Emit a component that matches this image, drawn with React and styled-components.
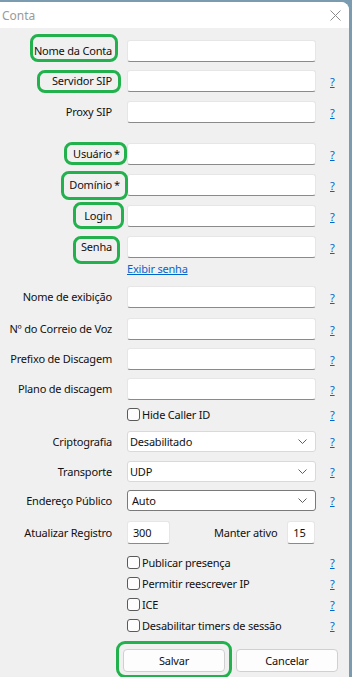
import styled, { createGlobalStyle } from 'styled-components';

const Global = createGlobalStyle`
  html, body {
    margin: 0;
    padding: 0;
    background-color: #7b9bb0;
  }
  body {
    font-family: "Noto Sans", "Open Sans", sans-serif;
    font-size: 11px;
    letter-spacing: -0.2px;
    color: #111111;
  }
`;

const Window = styled.div`
  width: 349px;
  height: 675px;
  margin-top: 2px;
  background-color: #f0f0f0;
  border-top-right-radius: 8px;
  overflow: hidden;
  display: flex;
  flex-direction: column;
`;

const TitleBar = styled.div`
  height: 26px;
  flex-shrink: 0;
  background-color: #ffffff;
  display: flex;
  align-items: center;
  justify-content: space-between;
  padding: 0 8px 0 2px;

  span {
    color: #9a9a9a;
    font-size: 12px;
    letter-spacing: 0;
  }
`;

const Form = styled.div`
  display: flex;
  flex-direction: column;
  padding-top: 12px;
`;

const Row = styled.div`
  display: grid;
  grid-template-columns: 112px 189px 1fr;
  column-gap: 15px;
  align-items: center;
  height: ${(p) => p.$h || 22}px;
  margin-top: ${(p) => p.$gap || 0}px;
`;

const Label = styled.div`
  text-align: right;
  white-space: nowrap;
  line-height: 16px;
`;

/* green annotation ring, anchored to the right edge of the label */
const Highlight = styled.span`
  position: relative;
  display: inline-block;
  line-height: 16px;

  &::after {
    content: '';
    position: absolute;
    top: ${(p) => p.$t}px;
    bottom: ${(p) => p.$b}px;
    right: ${(p) => p.$r}px;
    width: ${(p) => p.$w}px;
    box-sizing: border-box;
    border: 3px solid #22b14c;
    border-radius: 8px;
    pointer-events: none;
  }
`;

const Required = styled.span`
  display: inline-block;
  margin-left: 2px;
  margin-right: -9px;
  width: 7px;
  text-align: left;
`;

const TextBox = styled.div`
  box-sizing: border-box;
  height: ${(p) => p.$h || 22}px;
  width: ${(p) => (p.$w ? `${p.$w}px` : '100%')};
  background-color: #ffffff;
  border: 1px solid #e6e6e6;
  border-bottom: 1px solid #8a8a8a;
  border-radius: 3px;
  padding-left: 5px;
  display: flex;
  align-items: center;
  flex-shrink: 0;
`;

const Combo = styled.div`
  box-sizing: border-box;
  height: 21px;
  background-color: #ffffff;
  border: 1px solid ${(p) => (p.$focus ? '#7a7a7a' : '#d9d9d9')};
  border-radius: 3px;
  padding: 0 8px 0 ${(p) => (p.$focus ? 4 : 2)}px;
  display: flex;
  align-items: center;
  justify-content: space-between;
`;

const Help = styled.a`
  color: #0066cc;
  text-decoration: underline;
  justify-self: start;
  margin-left: -1px;
`;

const LinkCell = styled.a`
  grid-column: 2;
  color: #0066cc;
  text-decoration: underline;
  line-height: 16px;
`;

const Inline = styled.div`
  display: flex;
  align-items: center;
`;

const SubLabel = styled.span`
  white-space: nowrap;
  margin-left: 44px;
  margin-right: 10px;
`;

const Check = styled.label`
  grid-column: 2;
  display: flex;
  align-items: center;
  white-space: nowrap;

  i {
    box-sizing: border-box;
    width: 13px;
    height: 13px;
    border: 1px solid #5a5a5a;
    border-radius: 3px;
    background-color: #fdfdfd;
    margin-right: 2px;
  }
`;

const ButtonRow = styled.div`
  display: flex;
  gap: 11px;
  margin-top: 13px;
  padding-left: 123px;
`;

const Button = styled.div`
  box-sizing: border-box;
  width: 102px;
  height: 23px;
  background-color: #fdfdfd;
  border: 1px solid #d0d0d0;
  border-radius: 4px;
  display: flex;
  align-items: center;
  justify-content: center;
  position: relative;
`;

const ButtonMark = styled.span`
  position: absolute;
  top: -9px;
  right: -8px;
  bottom: -7px;
  left: -8px;
  border: 3px solid #22b14c;
  border-radius: 9px;
`;

function Chevron() {
  return (
    <svg width="9" height="5" viewBox="0 0 9 5">
      <path d="M0.5 0.5 L4.5 4.5 L8.5 0.5" fill="none" stroke="#606060" strokeWidth="1" />
    </svg>
  );
}

function CloseIcon() {
  return (
    <svg width="11" height="11" viewBox="0 0 11 11">
      <path d="M0.5 0.5 L10.5 10.5 M10.5 0.5 L0.5 10.5" stroke="#8c8c8c" strokeWidth="1" />
    </svg>
  );
}

// mark = [top, bottom, right, width]
function Field({ label, mark, required, gap, help = true }) {
  return (
    <Row $gap={gap}>
      <Label>
        {mark ? (
          <Highlight $t={mark[0]} $b={mark[1]} $r={mark[2]} $w={mark[3]}>
            {label}
          </Highlight>
        ) : (
          label
        )}
        {required && <Required>*</Required>}
      </Label>
      <TextBox />
      {help && <Help>?</Help>}
    </Row>
  );
}

function ComboField({ label, value, gap, focus }) {
  return (
    <Row $gap={gap} $h={21}>
      <Label>{label}</Label>
      <Combo $focus={focus}>
        <span>{value}</span>
        <Chevron />
      </Combo>
      <Help>?</Help>
    </Row>
  );
}

function CheckField({ label, gap, h = 21 }) {
  return (
    <Row $gap={gap} $h={h}>
      <span />
      <Check>
        <i />
        {label}
      </Check>
      <Help>?</Help>
    </Row>
  );
}

export default function App() {
  return (
    <>
      <Global />
      <Window>
        <TitleBar>
          <span>Conta</span>
          <CloseIcon />
        </TitleBar>
        <Form>
          <Field label="Nome da Conta" mark={[-9, -3, -6, 88]} help={false} />
          <Field label="Servidor SIP" mark={[-3, -4, -9, 84]} gap={8} />
          <Field label="Proxy SIP" gap={9} />
          <Field label="Usuário" mark={[-4, -3, -15, 63]} required gap={20} />
          <Field label="Domínio" mark={[-6, -7, -16, 67]} required gap={9} />
          <Field label="Login" mark={[-6, -5, -12, 51]} gap={9} />
          <Field label="Senha" mark={[-3, -9, -8, 47]} gap={9} />
          <Row $h={16} $gap={3}>
            <LinkCell>Exibir senha</LinkCell>
          </Row>
          <Field label="Nome de exibição" gap={9} />
          <Field label="Nº do Correio de Voz" gap={10} />
          <Field label="Prefixo de Discagem" gap={8} />
          <Field label="Plano de discagem" gap={8} />
          <CheckField label="Hide Caller ID" gap={3} h={22} />
          <ComboField label="Criptografia" value="Desabilitado" gap={6} />
          <ComboField label="Transporte" value="UDP" gap={9} />
          <ComboField label="Endereço Público" value="Auto" gap={8} focus />
          <Row $gap={10} $h={23}>
            <Label>Atualizar Registro</Label>
            <Inline>
              <TextBox $w={43} $h={23}>300</TextBox>
              <SubLabel>Manter ativo</SubLabel>
              <TextBox $w={28} $h={23}>15</TextBox>
            </Inline>
          </Row>
          <CheckField label="Publicar presença" gap={8} />
          <CheckField label="Permitir reescrever IP" />
          <CheckField label="ICE" />
          <CheckField label="Desabilitar timers de sessão" />
          <ButtonRow>
            <Button>
              Salvar
              <ButtonMark />
            </Button>
            <Button>Cancelar</Button>
          </ButtonRow>
        </Form>
      </Window>
    </>
  );
}
